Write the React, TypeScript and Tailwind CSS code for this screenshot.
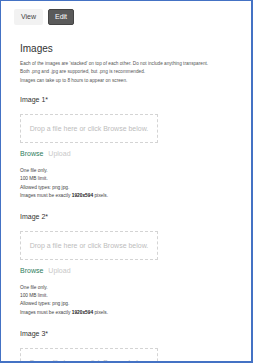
import React from "react";

const font = { fontFamily: '"Liberation Sans", Arial, sans-serif' };

function Section({ n }: { n: number }) {
  return (
    <div className="flex flex-col">
      <div className="text-[7px] leading-[9px] text-[#333]">Image {n}*</div>
      <div className="mt-[10px] w-[138px] h-[29px] border border-dashed border-[#d4d4d4] flex items-center justify-center text-[7px] leading-[9px] text-[#bdbdbd]">
        Drop a file here or click Browse below.
      </div>
      <div className="mt-[6px] flex gap-[5px] text-[7px] leading-[9px]">
        <span className="text-[#2e7d5e]">Browse</span>
        <span className="text-[#c8c8c8]">Upload</span>
      </div>
      <div className="mt-[8.7px] flex flex-col text-[4.8px] leading-[8.3px] text-[#444]">
        <div>One file only.</div>
        <div>100 MB limit.</div>
        <div>Allowed types: png jpg.</div>
        <div>
          Images must be exactly <span className="font-bold text-[#222]">1920x594</span> pixels.
        </div>
      </div>
    </div>
  );
}

export default function App() {
  return (
    <div
      style={font}
      className="w-[253px] h-[363px] overflow-hidden bg-white border-t border-l border-r-2 border-b-2 border-[#4472c4] flex flex-col"
    >
      <div className="pt-[8px] pl-[13px] flex gap-[5px]">
        <div className="w-[29px] h-[16px] rounded-[2px] bg-[#f2f2f2] flex items-center justify-center text-[7px] text-[#444]">
          View
        </div>
        <div className="w-[26px] h-[16px] rounded-[2px] bg-[#5a5a5a] border border-[#444] flex items-center justify-center text-[7px] text-white">
          Edit
        </div>
      </div>
      <div className="pl-[19px] flex flex-col">
        <div className="mt-[18px] text-[10px] leading-[12px] text-[#333]">Images</div>
        <div className="mt-[5px] flex flex-col text-[4.7px] leading-[8.4px] text-[#555]">
          <div>Each of the images are 'stacked' on top of each other. Do not include anything transparent.</div>
          <div>Both .png and .jpg are supported, but .png is recommended.</div>
          <div>Images can take up to 8 hours to appear on screen.</div>
        </div>
        <div className="mt-[10px] flex flex-col gap-[12px]">
          <Section n={1} />
          <Section n={2} />
          <Section n={3} />
        </div>
      </div>
    </div>
  );
}
